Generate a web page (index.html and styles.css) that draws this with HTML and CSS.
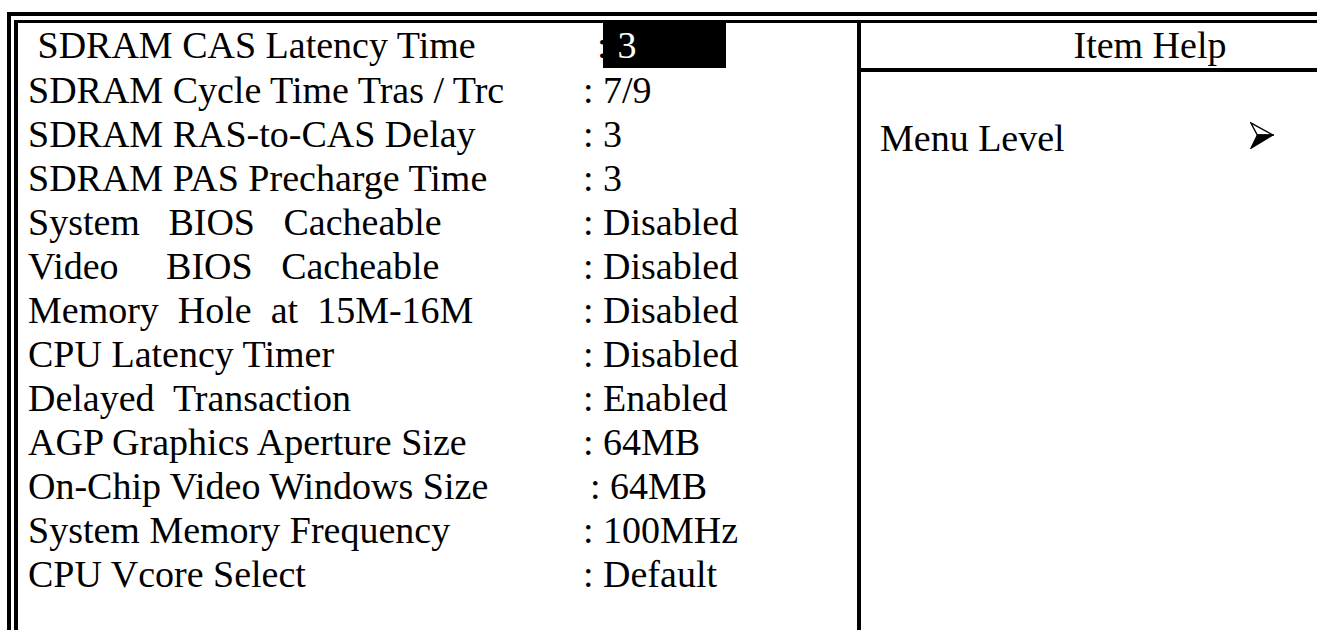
FILE: index.html
```html
<!DOCTYPE html>
<html lang="en">
<head>
  <meta charset="UTF-8" />
  <title>Advanced Chipset Features</title>
  <link rel="stylesheet" href="styles.css">
</head>
<body>

<div class="frame">
  <div class="panel">

    <!-- setup items -->
    <div class="settings">
      <div class="row current">
        <span class="label"> SDRAM CAS Latency Time</span>
        <span class="value"><span class="colon">:</span><span class="selected">3</span></span>
      </div>
      <div class="row"><span class="label">SDRAM Cycle Time Tras / Trc</span><span class="value">: 7/9</span></div>
      <div class="row"><span class="label">SDRAM RAS-to-CAS Delay</span><span class="value">: 3</span></div>
      <div class="row"><span class="label">SDRAM PAS Precharge Time</span><span class="value">: 3</span></div>
      <div class="row"><span class="label">System   BIOS   Cacheable</span><span class="value">: Disabled</span></div>
      <div class="row"><span class="label">Video     BIOS   Cacheable</span><span class="value">: Disabled</span></div>
      <div class="row"><span class="label">Memory  Hole  at  15M-16M</span><span class="value">: Disabled</span></div>
      <div class="row"><span class="label">CPU Latency Timer</span><span class="value">: Disabled</span></div>
      <div class="row"><span class="label">Delayed  Transaction</span><span class="value">: Enabled</span></div>
      <div class="row"><span class="label">AGP Graphics Aperture Size</span><span class="value">: 64MB</span></div>
      <div class="row"><span class="label">On-Chip Video Windows Size</span><span class="value nudge">: 64MB</span></div>
      <div class="row"><span class="label">System Memory Frequency</span><span class="value">: 100MHz</span></div>
      <div class="row"><span class="label">CPU Vcore Select</span><span class="value">: Default</span></div>
    </div>

    <!-- help panel -->
    <div class="help">
      <div class="help-title">Item Help</div>
      <div class="help-body">
        <span>Menu Level</span>
        <svg class="arrow" width="24" height="27" viewBox="0 0 24 27">
          <polygon points="0.8,0.8 22.8,13 7.3,13" fill="#fff" stroke="#000" stroke-width="1.4" stroke-linejoin="miter"/>
          <polygon points="7.3,13 22.8,13 0.8,26.4" fill="#000" stroke="#000" stroke-width="1.2"/>
        </svg>
      </div>
    </div>

  </div>
</div>

</body>
</html>
```

FILE: styles.css
```css
body {
  margin: 0;
  height: 630px;
  overflow: hidden;
  background: #fff;
  color: #000;
  font-family: "Liberation Serif", "Times New Roman", serif;
  font-size: 38px;
}
.frame {
  width: 1500px;
  margin: 12px 0 0 7px;
  padding: 4px 0 0 3px;
  border-top: 4px solid #000;
  border-left: 4px solid #000;
}
.panel {
  display: grid;
  grid-template-columns: 839px 582px;
  height: 700px;
  border-top: 3px solid #000;
  border-left: 4px solid #000;
}
.settings {
  padding-left: 10px;
}
.row {
  display: flex;
  height: 44px;
  line-height: 44px;
}
.label {
  width: 555px;
  flex-shrink: 0;
  white-space: pre;
}
.value {
  white-space: pre;
}
.nudge {
  padding-left: 7px;
}
.row.current {
  height: 44.5px;
  line-height: 45px;
}
.row.current .value {
  margin-left: 14px;
}
.selected {
  display: inline-block;
  box-sizing: border-box;
  width: 123px;
  height: 45px;
  margin-left: -5px;
  padding-left: 15px;
  background: #000;
  color: #fff;
}
.help {
  border-left: 4px solid #000;
}
.help-title {
  height: 45px;
  line-height: 45px;
  text-align: center;
  border-bottom: 4px solid #000;
}
.help-body {
  display: flex;
  align-items: flex-start;
  gap: 185px;
  padding: 44px 0 0 19px;
  line-height: 44px;
}
.arrow {
  margin-top: 6px;
}
```
